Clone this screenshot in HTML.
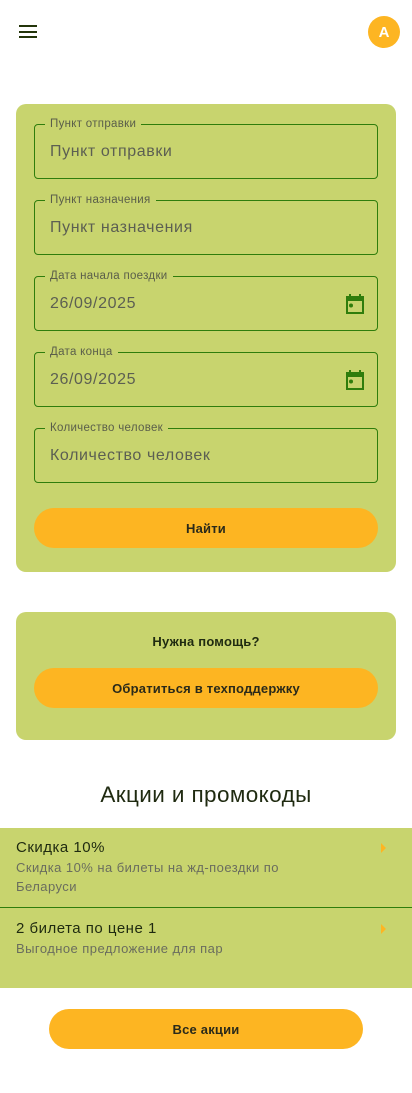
<!DOCTYPE html>
<html><head><meta charset="utf-8"><style>
*{box-sizing:border-box;margin:0;padding:0}
body{width:412px;height:1093px;background:#fff;font-family:"Liberation Sans",sans-serif;position:relative;overflow:hidden}
.abs{position:absolute}
.card{position:absolute;left:16px;width:380px;background:#c8d46e;border-radius:10px}
.field{position:absolute;left:34px;width:344px;height:55px;border:1.3px solid #2f7d0c;border-radius:4px}
.field .lab{position:absolute;left:10px;top:-8px;font-size:11.5px;color:#5a5e4a;background:#c8d46e;padding:0 5px;line-height:14px;letter-spacing:.3px}
.field .val{position:absolute;left:15px;top:18px;font-size:16px;color:#5c5f52;letter-spacing:.6px}
.field svg{position:absolute;right:13px;top:16px}
.btn{position:absolute;background:#fdb522;border-radius:20px;height:40px;font-size:13px;font-weight:bold;color:#2a2a1a;display:flex;align-items:center;justify-content:center;letter-spacing:.2px}
.t{position:absolute;left:16px;font-size:15px;color:#1f2a10;letter-spacing:.5px}
.s{position:absolute;left:16px;font-size:13px;color:#6a6d5e;line-height:19px;letter-spacing:.45px}
.chev{position:absolute;left:381px;width:0;height:0;border-top:5px solid transparent;border-bottom:5px solid transparent;border-left:5px solid #fdb522}
</style></head><body>
<div class="abs" style="left:19px;top:25px;width:18px;height:2px;background:#24350a"></div>
<div class="abs" style="left:19px;top:31px;width:18px;height:2px;background:#24350a"></div>
<div class="abs" style="left:19px;top:36px;width:18px;height:2px;background:#24350a"></div>
<div class="abs" style="left:368px;top:16px;width:32px;height:32px;border-radius:50%;background:#fdb522;color:#fff;font-size:15px;font-weight:bold;display:flex;align-items:center;justify-content:center">A</div>

<div class="card" style="top:104px;height:468px"></div>
<div class="field" style="top:124px"><span class="lab">Пункт отправки</span><span class="val">Пункт отправки</span></div>
<div class="field" style="top:200px"><span class="lab">Пункт назначения</span><span class="val">Пункт назначения</span></div>
<div class="field" style="top:276px"><span class="lab">Дата начала поездки</span><span class="val">26/09/2025</span>
<svg width="20" height="22" viewBox="0 0 20 22"><rect x="3" y="4" width="16" height="16" fill="none" stroke="#2f7d0c" stroke-width="2"/><rect x="3" y="4" width="16" height="4" fill="#2f7d0c"/><rect x="5" y="1" width="2" height="4" fill="#2f7d0c"/><rect x="15" y="1" width="2" height="4" fill="#2f7d0c"/><circle cx="7" cy="12.5" r="2" fill="#2f7d0c"/></svg></div>
<div class="field" style="top:352px"><span class="lab">Дата конца</span><span class="val">26/09/2025</span>
<svg width="20" height="22" viewBox="0 0 20 22"><rect x="3" y="4" width="16" height="16" fill="none" stroke="#2f7d0c" stroke-width="2"/><rect x="3" y="4" width="16" height="4" fill="#2f7d0c"/><rect x="5" y="1" width="2" height="4" fill="#2f7d0c"/><rect x="15" y="1" width="2" height="4" fill="#2f7d0c"/><circle cx="7" cy="12.5" r="2" fill="#2f7d0c"/></svg></div>
<div class="field" style="top:428px"><span class="lab">Количество человек</span><span class="val">Количество человек</span></div>
<div class="btn" style="left:34px;top:508px;width:344px">Найти</div>

<div class="card" style="top:612px;height:128px"></div>
<div class="abs" style="left:16px;width:380px;top:634px;text-align:center;font-size:13px;font-weight:bold;color:#1f2a10;letter-spacing:.2px">Нужна помощь?</div>
<div class="btn" style="left:34px;top:668px;width:344px">Обратиться в техподдержку</div>

<div class="abs" style="left:0;width:412px;top:782px;text-align:center;font-size:22.5px;color:#1f2a10;letter-spacing:.4px">Акции и промокоды</div>
<div class="abs" style="left:0;top:828px;width:412px;height:160px;background:#c8d46e"></div>
<div class="abs" style="left:0;top:907px;width:412px;height:1px;background:#2f7d0c"></div>
<div class="t" style="top:839px">Скидка 10%</div>
<div class="s" style="top:858px">Скидка 10% на билеты на жд-поездки по<br>Беларуси</div>
<div class="chev" style="top:843px"></div>
<div class="t" style="top:920px">2 билета по цене 1</div>
<div class="s" style="top:939px">Выгодное предложение для пар</div>
<div class="chev" style="top:924px"></div>

<div class="btn" style="left:49px;top:1009px;width:314px">Все акции</div>
</body></html>
